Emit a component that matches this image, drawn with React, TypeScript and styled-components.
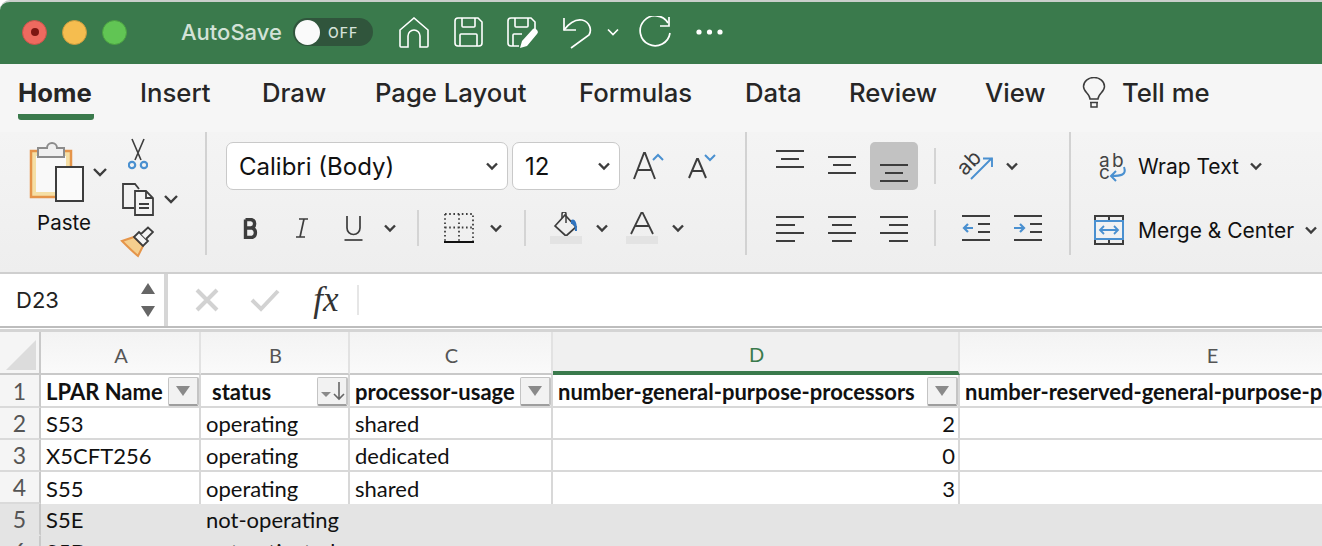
import React from 'react';
import styled, { createGlobalStyle } from 'styled-components';

const Global = createGlobalStyle`
  html, body {
    margin: 0;
    padding: 0;
    background: #fff;
    overflow: hidden;
  }
  * { box-sizing: border-box; }
`;

const uiFont = `Inter, "Noto Sans", sans-serif`;
const sheetFont = `Lato, "Open Sans", sans-serif`;

const Page = styled.div`
  width: 1322px;
  height: 546px;
  overflow: hidden;
  background: #fff;
  font-family: ${uiFont};
`;

const TitleBar = styled.div`
  height: 64px;
  background: #3a7a4c;
  border-top: 2px solid #c9cfcb;
  border-top-left-radius: 10px;
  display: flex;
  align-items: center;
  padding: 0 0 2px 22px;
`;

const Lights = styled.div`
  display: flex;
  gap: 15px;
  margin-right: 54px;
`;

const Light = styled.span<{ $c: string; $b: string }>`
  width: 25px;
  height: 25px;
  border-radius: 50%;
  background: ${p => p.$c};
  border: 1.5px solid ${p => p.$b};
  display: flex;
  align-items: center;
  justify-content: center;
`;

const RedDot = styled.span`
  width: 8px;
  height: 8px;
  border-radius: 50%;
  background: #7d1612;
`;

const AutoSave = styled.span`
  color: #d3e2d7;
  font-size: 22px;
  font-weight: 500;
  width: 112px;
  white-space: nowrap;
`;

const Toggle = styled.div`
  width: 80px;
  height: 28px;
  border-radius: 14px;
  background: #30553c;
  display: flex;
  align-items: center;
  padding-left: 2px;
  margin-right: 26px;
`;

const Knob = styled.span`
  width: 25px;
  height: 25px;
  border-radius: 50%;
  background: #fafafa;
  margin-right: 8px;
`;

const OffLabel = styled.span`
  color: #d5e2d9;
  font-size: 14px;
  font-weight: 500;
  letter-spacing: 1px;
`;

const QuickIcon = styled.span<{ $w: number; $ml?: number }>`
  width: ${p => p.$w}px;
  margin-left: ${p => p.$ml ?? 0}px;
  flex-shrink: 0;
  display: flex;
  justify-content: center;
  align-items: center;
`;

const TabBar = styled.div`
  height: 68px;
  background: #f6f6f6;
  display: flex;
  align-items: flex-start;
  padding: 13px 0 0 18px;
`;

const Tab = styled.div<{ $w: number; $active?: boolean }>`
  width: ${p => p.$w}px;
  height: 43px;
  font-size: 25.7px;
  line-height: 32px;
  color: #262626;
  font-weight: ${p => (p.$active ? 700 : 500)};
  white-space: nowrap;
  border-bottom: ${p => (p.$active ? '6px' : '0')} solid #3a7a4c;
  border-radius: 0 0 3px 3px;
`;

const TabSlot = styled.div<{ $w: number }>`
  width: ${p => p.$w}px;
`;

const Ribbon = styled.div`
  height: 142px;
  background: linear-gradient(#f4f4f4, #eeeeee);
  border-bottom: 2px solid #cfcfcf;
  display: flex;
`;

const Group = styled.div<{ $w: number; $pl: number; $last?: boolean }>`
  width: ${p => p.$w}px;
  height: 123px;
  padding: 10px 0 0 ${p => p.$pl}px;
  border-right: ${p => (p.$last ? '0' : '2px solid #d2d2d2')};
  display: flex;
  flex-direction: column;
  gap: ${p => (p.$last ? 16 : 14)}px;
  flex-shrink: 0;
`;

const Row = styled.div`
  height: 48px;
  display: flex;
  align-items: center;
`;

const Slot = styled.div<{ $w: number }>`
  width: ${p => p.$w}px;
  height: 48px;
  flex-shrink: 0;
  display: flex;
  align-items: center;
  justify-content: center;
`;

const Selected = styled.div`
  width: 48px;
  height: 48px;
  background: #c2c2c2;
  border-radius: 5px;
  display: flex;
  align-items: center;
  justify-content: center;
`;

const VSep = styled.div`
  width: 2px;
  height: 36px;
  background: #d4d4d4;
`;

const Select = styled.div<{ $w: number }>`
  width: ${p => p.$w}px;
  height: 48px;
  flex-shrink: 0;
  margin-right: 4px;
  background: #fff;
  border: 1px solid #c9c9c9;
  border-radius: 7px;
  font-size: 24px;
  color: #111;
  display: flex;
  align-items: center;
  justify-content: space-between;
  padding: 0 8px 0 12px;
`;

const ClipboardWrap = styled.div`
  display: flex;
`;

const PasteCol = styled.div`
  width: 100px;
  display: flex;
  flex-direction: column;
  align-items: flex-start;
`;

const PasteLabel = styled.div`
  font-size: 20.5px;
  color: #111;
  line-height: 24px;
  margin-top: 5px;
  width: 88px;
  text-align: center;
`;

const ToolCol = styled.div`
  display: flex;
  flex-direction: column;
  gap: 10px;
  margin-top: -4px;
`;

const ToolItem = styled.div<{ $ml?: number }>`
  height: 34px;
  margin-left: ${p => p.$ml ?? 0}px;
  display: flex;
`;

const WrapRow = styled(Row)`
  gap: 10px;
  font-size: 21px;
  color: #111;
  white-space: nowrap;
`;

const WrapIcon = styled.span`
  width: 34px;
  flex-shrink: 0;
  display: flex;
`;

const FormulaBar = styled.div`
  height: 54px;
  display: flex;
  background: #fff;
  border-bottom: 2px solid #bdbdbd;
`;

const NameBox = styled.div`
  width: 168px;
  border-right: 4px solid #d6d6d6;
  display: flex;
  align-items: center;
  justify-content: space-between;
  padding: 0 8px 0 16px;
  font-size: 22px;
  color: #222;
`;

const FormulaTools = styled.div`
  display: flex;
  align-items: center;
  padding-left: 26px;
`;

const Fx = styled.span`
  font-family: "Liberation Serif", serif;
  font-style: italic;
  font-size: 35px;
  line-height: 32px;
  color: #333;
  width: 44px;
  margin-left: 24px;
  text-align: center;
`;

const FormulaSep = styled.div`
  width: 2px;
  height: 30px;
  background: #e6e6e6;
  margin-left: 9px;
`;

const Sheet = styled.div`
  display: grid;
  grid-template-columns: 41px 160px 149px 203px 407px 505px;
  grid-template-rows: 43px 33px 32px 32px 32px 32px 32px;
  margin-top: 1px;
  border-top: 3px solid #d4d4d4;
  font-family: ${sheetFont};
  font-size: 22px;
  color: #111;
`;

const Corner = styled.div`
  background: #f5f5f5;
  border-right: 2px solid #c9c9c9;
  border-bottom: 2px solid #c9c9c9;
  display: flex;
  padding: 8px 0 0 6px;
`;

const ColHead = styled.div<{ $active?: boolean }>`
  background: ${p => (p.$active ? '#f0f0f0' : 'linear-gradient(#f3f3f3, #fafafa)')};
  color: ${p => (p.$active ? '#3a7a4c' : '#555')};
  border-right: 2px solid #e2e2e2;
  border-bottom: ${p => (p.$active ? '4px solid #3a7a4c' : '2px solid #c9c9c9')};
  font-size: 20px;
  display: flex;
  align-items: center;
  justify-content: center;
  padding: 5px 0 0 2px;
`;

const RowHead = styled.div<{ $muted?: boolean }>`
  background: ${p => (p.$muted ? '#e4e4e4' : '#f5f5f5')};
  border-right: 2px solid #c9c9c9;
  border-bottom: 2px solid ${p => (p.$muted ? '#e4e4e4' : '#dadada')};
  color: #555;
  font-size: 23px;
  display: flex;
  align-items: center;
  justify-content: center;
`;

const Cell = styled.div<{ $right?: boolean; $bold?: boolean; $muted?: boolean; $indent?: number; $flush?: boolean }>`
  background: ${p => (p.$muted ? '#e4e4e4' : '#fff')};
  border-right: 2px solid ${p => (p.$muted ? '#e4e4e4' : '#d8d8d8')};
  border-bottom: ${p => (p.$flush ? '0' : `2px solid ${p.$muted ? '#e4e4e4' : '#d8d8d8'}`)};
  display: flex;
  align-items: center;
  justify-content: ${p => (p.$right ? 'flex-end' : 'space-between')};
  padding: ${p => (p.$bold ? 1 : 0)}px 3px 0 ${p => p.$indent ?? 5}px;
  font-weight: ${p => (p.$bold ? 700 : 400)};
  white-space: nowrap;
  overflow: ${p => (p.$muted ? 'visible' : 'hidden')};
  min-width: 0;
`;

const FilterButton = styled.span`
  width: 31px;
  height: 29px;
  flex-shrink: 0;
  margin-right: -3px;
  background: #f2f2f2;
  border: 1px solid #c4c4c4;
  border-right-width: 2px;
  border-bottom: 2px solid #9e9e9e;
  border-radius: 2px;
  display: flex;
  align-items: center;
  justify-content: center;
`;

const stroke = '#3d3d3d';

const Chevron = ({ c = stroke, sw = 2.4 }: { c?: string; sw?: number }) => (
  <svg width="14" height="10" viewBox="0 0 14 10">
    <path d="M2 2.5 L7 7.5 L12 2.5" fill="none" stroke={c} strokeWidth={sw} />
  </svg>
);

const Home = () => (
  <svg width="30" height="31" viewBox="0 0 30 31" fill="none" stroke="#fff" strokeWidth="1.6">
    <path d="M1 13 L15 1 L29 13 L29 29 a1 1 0 0 1 -1 1 L21 30 L21 19 a6 6 0 0 0 -12 0 L9 30 L2 30 a1 1 0 0 1 -1 -1 Z" />
  </svg>
);

const Save = () => (
  <svg width="29" height="30" viewBox="0 0 29 30" fill="none" stroke="#fff" strokeWidth="1.6">
    <path d="M4 1 H24 L28 5 V26 a3 3 0 0 1 -3 3 H4 a3 3 0 0 1 -3 -3 V4 a3 3 0 0 1 3 -3 Z" />
    <path d="M8 1 V9 a1 1 0 0 0 1 1 H20 a1 1 0 0 0 1 -1 V1" />
    <path d="M6 29 V18 a1 1 0 0 1 1 -1 H22 a1 1 0 0 1 1 1 V29" />
  </svg>
);

const SaveEdit = () => (
  <svg width="31" height="31" viewBox="0 0 31 31" fill="none" stroke="#fff" strokeWidth="1.6">
    <path d="M12 29 H4 a3 3 0 0 1 -3 -3 V4 a3 3 0 0 1 3 -3 H24 L28 5 V13" />
    <path d="M8 1 V9 a1 1 0 0 0 1 1 H20 a1 1 0 0 0 1 -1 V1" />
    <path d="M6 29 V18 a1 1 0 0 1 1 -1 H15" />
    <path d="M13 31 L15 24 L25 13 a3 3 0 0 1 5 4 L20 29 Z" fill="#fff" stroke="none" />
  </svg>
);

const Undo = () => (
  <svg width="30" height="33" viewBox="0 0 30 33" fill="none" stroke="#fff" strokeWidth="1.7">
    <path d="M2 2 V14 H14" />
    <path d="M2 14 C8 6 14 3 20 4 C28 6 30 14 27 19 L9 32" />
  </svg>
);

const Redo = () => (
  <svg width="33" height="33" viewBox="0 0 33 33" fill="none" stroke="#fff" strokeWidth="1.7">
    <path d="M29 7 A15 15 0 1 0 31 17" />
    <path d="M30 1 V10 H21" />
  </svg>
);

const Dots = () => (
  <svg width="27" height="6" viewBox="0 0 27 6" fill="#fff">
    <circle cx="3" cy="3" r="2.6" />
    <circle cx="13.5" cy="3" r="2.6" />
    <circle cx="24" cy="3" r="2.6" />
  </svg>
);

const Bulb = () => (
  <svg width="24" height="32" viewBox="0 0 24 32" fill="none" stroke="#3d3d3d" strokeWidth="1.5">
    <path d="M8 22 C8 17 1.5 15 1.5 9.5 A10.5 9 0 0 1 22.5 9.5 C22.5 15 16 17 16 22 Z" />
    <path d="M8 25.5 H16 M9 26 V30 H15 V26" />
  </svg>
);

const PasteIcon = () => (
  <svg width="88" height="64" viewBox="0 0 88 64" fill="none">
    <rect x="11" y="9" width="40" height="46" fill="#f5dfa5" stroke="#e59449" strokeWidth="2.5" />
    <rect x="16" y="14" width="30" height="36" fill="#f9f9f9" />
    <path d="M18 9 V6 H27 a5 5 0 0 1 10 0 H44 V15 H18 Z" fill="#f0f0f0" stroke="#8c8c8c" strokeWidth="2" />
    <rect x="36" y="25" width="27" height="34" fill="#fafafa" stroke="#3d3d3d" strokeWidth="2" />
    <path d="M74 27 L80 33 L86 27" stroke={stroke} strokeWidth="2.4" />
  </svg>
);

const Scissors = () => (
  <svg width="20" height="34" viewBox="0 0 20 34" fill="none">
    <path d="M4 1 L13 22 M16 1 L7 22" stroke="#3d3d3d" strokeWidth="1.6" />
    <circle cx="4" cy="27" r="3.2" stroke="#4a90d0" strokeWidth="2.2" />
    <circle cx="16" cy="27" r="3.2" stroke="#4a90d0" strokeWidth="2.2" />
  </svg>
);

const CopyIcon = () => (
  <svg width="62" height="34" viewBox="0 0 62 34" fill="none" stroke={stroke} strokeWidth="1.8">
    <path d="M14 26 H3 V2 H15 L19 7" />
    <path d="M15 9 H26 L33 16 V33 H15 Z" fill="#f3f3f3" />
    <path d="M26 9 V16 H33" />
    <path d="M19 22 H29 M19 26 H29" />
    <path d="M45 14 L51 20 L57 14" strokeWidth="2.4" />
  </svg>
);

const Brush = () => (
  <svg width="34" height="32" viewBox="0 0 34 32" fill="none">
    <path d="M2 15 L14 11 L23 20 L18 30 C12 25 7 20 2 15 Z" fill="#f5cf8e" stroke="#e5954a" strokeWidth="2" />
    <path d="M14 11 L19 6 L28 15 L23 20 Z" fill="#f5f5f5" stroke="#3d3d3d" strokeWidth="1.8" />
    <path d="M21 8 L28 1.5 L33 6 L26 13" fill="#f5f5f5" stroke="#3d3d3d" strokeWidth="1.8" />
  </svg>
);

const GrowA = () => (
  <svg width="34" height="30" viewBox="0 0 34 30" fill="none">
    <path d="M2 28 L12 2 H13 L23 28 M6 19 H19" stroke={stroke} strokeWidth="2" />
    <path d="M21 9 L26 4 L31 9" stroke="#4a90d0" strokeWidth="2" />
  </svg>
);

const ShrinkA = () => (
  <svg width="30" height="26" viewBox="0 0 30 26" fill="none">
    <path d="M2 25 L10 6 H11 L19 25 M5 18 H16" stroke={stroke} strokeWidth="2" />
    <path d="M18 2 L23 7 L28 2" stroke="#4a90d0" strokeWidth="2" />
  </svg>
);

const Bold = () => (
  <svg width="16" height="21" viewBox="0 0 16 21" fill="none" stroke="#3d3d3d" strokeWidth="3.4">
    <path d="M2.5 1.5 V19.5 H9 a5 5 0 0 0 0 -9.5 H2.5 M2.5 10 H8 a4.3 4.3 0 0 0 0 -8.5 H2.5" />
  </svg>
);

const Italic = () => (
  <svg width="14" height="20" viewBox="0 0 14 20" fill="none" stroke="#3d3d3d" strokeWidth="1.7">
    <path d="M4 1 H13 M1 19 H10 M9 1 L5 19" />
  </svg>
);

const Under = () => (
  <svg width="19" height="26" viewBox="0 0 19 26" fill="none" stroke="#3d3d3d" strokeWidth="1.7">
    <path d="M3 1 V13 a6.5 6.5 0 0 0 13 0 V1" />
    <path d="M0.5 25 H18.5" />
  </svg>
);

const Borders = () => (
  <svg width="30" height="30" viewBox="0 0 30 30" fill="none" stroke="#3d3d3d" strokeWidth="1.8" strokeDasharray="1.6 2.6">
    <path d="M1 1 H29 V28 M1 1 V28 M1 14.5 H29 M15 1 V28" />
    <path d="M0 29 H30" strokeDasharray="none" stroke="#111" strokeWidth="2" />
  </svg>
);

const FillColor = () => (
  <svg width="32" height="32" viewBox="0 0 32 32" fill="none">
    <path d="M5 14 L15 3 L26 15 L16 24 Z" stroke={stroke} strokeWidth="1.7" />
    <path d="M12 6 V2 a2 2 0 0 1 4 0 V11" stroke={stroke} strokeWidth="1.5" />
    <path d="M21 8 C25 6 27 10 27 19 L25 19 C25 14 24 12 21 12 Z" fill="#2f74c0" />
    <rect y="24" width="32" height="8" fill="#e3e3e3" />
  </svg>
);

const FontColor = () => (
  <svg width="32" height="32" viewBox="0 0 32 32" fill="none">
    <path d="M5 22 L15.5 0.5 H16.5 L27 22 M9 14 H23" stroke={stroke} strokeWidth="1.8" />
    <rect y="24" width="32" height="8" fill="#e3e3e3" />
  </svg>
);

// one icon per alignment, lines drawn from y0 inside the 48px row
const Lines = ({ rows, y0 }: { rows: [number, number][]; y0: number }) => (
  <svg width="28" height="48" viewBox="0 0 28 48" fill="none" stroke={stroke} strokeWidth="2">
    {rows.map(([x, w], i) => (
      <path key={i} d={`M${x} ${y0 + i * 8} h${w}`} />
    ))}
  </svg>
);

const Orientation = () => (
  <svg width="34" height="34" viewBox="0 0 34 34" fill="none">
    <text x="-2" y="20" fontSize="21" fontFamily="Inter, sans-serif" fill="#3d3d3d" transform="rotate(-45 11 14)">ab</text>
    <path d="M12 30 L33 9 M24 9.5 H33 V18" stroke="#4a90d0" strokeWidth="1.9" />
  </svg>
);

const Outdent = () => (
  <svg width="28" height="26" viewBox="0 0 28 26" fill="none" stroke={stroke} strokeWidth="2">
    <path d="M0 1 H28 M16 9 H28 M16 17 H28 M0 25 H28" />
    <path d="M11 13 H2 M6 9 L2 13 L6 17" stroke="#4a90d0" strokeWidth="2.2" />
  </svg>
);

const Indent = () => (
  <svg width="28" height="26" viewBox="0 0 28 26" fill="none" stroke={stroke} strokeWidth="2">
    <path d="M0 1 H28 M16 9 H28 M16 17 H28 M0 25 H28" />
    <path d="M0 13 H10 M6 9 L10 13 L6 17" stroke="#4a90d0" strokeWidth="2.2" />
  </svg>
);

const WrapGlyph = () => (
  <svg width="34" height="34" viewBox="0 0 34 34" fill="none">
    <text x="5" y="18" fontSize="19" fontFamily="Inter, sans-serif" fill="#444">a</text>
    <text x="18" y="18" fontSize="19" fontFamily="Inter, sans-serif" fill="#444">b</text>
    <text x="5" y="30" fontSize="19" fontFamily="Inter, sans-serif" fill="#444">c</text>
    <path d="M30 18 C33 26 27 27 17 27 M22 22 L17 27 L22 32" stroke="#4a90d0" strokeWidth="2" />
  </svg>
);

const Merge = () => (
  <svg width="30" height="30" viewBox="0 0 30 30" fill="none">
    <rect x="1" y="1" width="28" height="28" stroke="#3d3d3d" strokeWidth="2" />
    <path d="M15 1 V6 M15 24 V29" stroke="#3d3d3d" strokeWidth="2" />
    <rect x="1" y="6" width="28" height="18" fill="#f2f2f2" stroke="#4a90d0" strokeWidth="2" />
    <path d="M6 15 H24 M10 11 L6 15 L10 19 M20 11 L24 15 L20 19" stroke="#4a90d0" strokeWidth="1.8" />
  </svg>
);

const Spinner = () => (
  <svg width="16" height="34" viewBox="0 0 16 34" fill="#666">
    <path d="M8 0 L15 11 H1 Z" />
    <path d="M1 23 H15 L8 34 Z" />
  </svg>
);

const Cancel = () => (
  <svg width="24" height="24" viewBox="0 0 24 24" fill="none" stroke="#d2d2d2" strokeWidth="4">
    <path d="M2 2 L22 22 M22 2 L2 22" />
  </svg>
);

const Confirm = () => (
  <svg width="30" height="24" viewBox="0 0 30 24" fill="none" stroke="#d2d2d2" strokeWidth="4">
    <path d="M2 12 L11 21 L28 3" />
  </svg>
);

const FilterArrow = () => (
  <svg width="16" height="10" viewBox="0 0 16 10" fill="#8a8a8a">
    <path d="M1 0 H15 L8 10 Z" />
  </svg>
);

const SortedArrow = () => (
  <svg width="27" height="20" viewBox="0 0 27 20" fill="none">
    <path d="M2 11 H12 L7 16 Z" fill="#8a8a8a" />
    <path d="M20 1 V18 M15 13 L20 18 L25 13" stroke="#666" strokeWidth="1.6" />
  </svg>
);

const threeLines: [number, number][] = [[0, 28], [5, 18], [0, 28]];
const alignLeft: [number, number][] = [[0, 28], [0, 19], [0, 28], [0, 19]];
const alignCenter: [number, number][] = [[0, 28], [4, 20], [0, 28], [4, 20]];
const alignRight: [number, number][] = [[0, 28], [9, 19], [0, 28], [9, 19]];

const tabs: [string, number][] = [
  ['Insert', 122],
  ['Draw', 113],
  ['Page Layout', 204],
  ['Formulas', 166],
  ['Data', 104],
  ['Review', 136],
  ['View', 97],
];

const dataRows = [
  ['S53', 'operating', 'shared', '2'],
  ['X5CFT256', 'operating', 'dedicated', '0'],
  ['S55', 'operating', 'shared', '3'],
];

const mutedRows = [
  ['S5E', 'not-operating'],
  ['S5D', 'not-activated'],
];

const App = () => (
  <Page>
    <Global />
    <TitleBar>
      <Lights>
        <Light $c="#ee6a5f" $b="#c9544a"><RedDot /></Light>
        <Light $c="#f5bd4f" $b="#c89a3e" />
        <Light $c="#61c554" $b="#4ba042" />
      </Lights>
      <AutoSave>AutoSave</AutoSave>
      <Toggle><Knob /><OffLabel>OFF</OffLabel></Toggle>
      <QuickIcon $w={30}><Home /></QuickIcon>
      <QuickIcon $w={29} $ml={25}><Save /></QuickIcon>
      <QuickIcon $w={31} $ml={24}><SaveEdit /></QuickIcon>
      <QuickIcon $w={30} $ml={24}><Undo /></QuickIcon>
      <QuickIcon $w={14} $ml={14}><Chevron c="#fff" sw={1.7} /></QuickIcon>
      <QuickIcon $w={33} $ml={19}><Redo /></QuickIcon>
      <QuickIcon $w={27} $ml={24}><Dots /></QuickIcon>
    </TitleBar>

    <TabBar>
      <Tab $w={76} $active>Home</Tab>
      <TabSlot $w={46} />
      {tabs.map(([label, w]) => (
        <Tab key={label} $w={w}>{label}</Tab>
      ))}
      <QuickIcon $w={24}><Bulb /></QuickIcon>
      <TabSlot $w={16} />
      <Tab $w={100}>Tell me</Tab>
    </TabBar>

    <Ribbon>
      <Group $w={207} $pl={20}>
        <ClipboardWrap>
          <PasteCol>
            <PasteIcon />
            <PasteLabel>Paste</PasteLabel>
          </PasteCol>
          <ToolCol>
            <ToolItem $ml={8}><Scissors /></ToolItem>
            <ToolItem><CopyIcon /></ToolItem>
            <ToolItem><Brush /></ToolItem>
          </ToolCol>
        </ClipboardWrap>
      </Group>

      <Group $w={540} $pl={19}>
        <Row>
          <Select $w={282}>Calibri (Body)<Chevron /></Select>
          <Select $w={108}>12<Chevron /></Select>
          <Slot $w={50}><GrowA /></Slot>
          <Slot $w={56}><ShrinkA /></Slot>
        </Row>
        <Row>
          <Slot $w={49}><Bold /></Slot>
          <Slot $w={54}><Italic /></Slot>
          <Slot $w={48}><Under /></Slot>
          <Slot $w={26}><Chevron /></Slot>
          <Slot $w={30}><VSep /></Slot>
          <Slot $w={52}><Borders /></Slot>
          <Slot $w={22}><Chevron /></Slot>
          <Slot $w={36}><VSep /></Slot>
          <Slot $w={46}><FillColor /></Slot>
          <Slot $w={26}><Chevron /></Slot>
          <Slot $w={54}><FontColor /></Slot>
          <Slot $w={18}><Chevron /></Slot>
        </Row>
      </Group>

      <Group $w={324} $pl={17}>
        <Row>
          <Slot $w={52}><Lines rows={threeLines} y0={9} /></Slot>
          <Slot $w={52}><Lines rows={threeLines} y0={15} /></Slot>
          <Slot $w={52}><Selected><Lines rows={threeLines} y0={23} /></Selected></Slot>
          <Slot $w={30}><VSep /></Slot>
          <Slot $w={52}><Orientation /></Slot>
          <Slot $w={20}><Chevron /></Slot>
        </Row>
        <Row>
          <Slot $w={52}><Lines rows={alignLeft} y0={13} /></Slot>
          <Slot $w={52}><Lines rows={alignCenter} y0={13} /></Slot>
          <Slot $w={52}><Lines rows={alignRight} y0={13} /></Slot>
          <Slot $w={30}><VSep /></Slot>
          <Slot $w={52}><Outdent /></Slot>
          <Slot $w={52}><Indent /></Slot>
        </Row>
      </Group>

      <Group $w={251} $pl={23} $last>
        <WrapRow>
          <WrapIcon><WrapGlyph /></WrapIcon>
          <span>Wrap Text</span>
          <Chevron />
        </WrapRow>
        <WrapRow>
          <WrapIcon><Merge /></WrapIcon>
          <span>Merge &amp; Center</span>
          <Chevron />
        </WrapRow>
      </Group>
    </Ribbon>

    <FormulaBar>
      <NameBox>D23<Spinner /></NameBox>
      <FormulaTools>
        <Slot $w={26}><Cancel /></Slot>
        <Slot $w={30} />
        <Slot $w={30}><Confirm /></Slot>
        <Fx>fx</Fx>
        <FormulaSep />
      </FormulaTools>
    </FormulaBar>

    <Sheet>
      <Corner>
        <svg width="30" height="30" viewBox="0 0 30 30" fill="#dcdcdc">
          <path d="M30 0 V30 H0 Z" />
        </svg>
      </Corner>
      <ColHead>A</ColHead>
      <ColHead>B</ColHead>
      <ColHead>C</ColHead>
      <ColHead $active>D</ColHead>
      <ColHead>E</ColHead>

      <RowHead>1</RowHead>
      <Cell $bold>LPAR Name<FilterButton><FilterArrow /></FilterButton></Cell>
      <Cell $bold $indent={11}>status<FilterButton><SortedArrow /></FilterButton></Cell>
      <Cell $bold>processor-usage<FilterButton><FilterArrow /></FilterButton></Cell>
      <Cell $bold>number-general-purpose-processors<FilterButton><FilterArrow /></FilterButton></Cell>
      <Cell $bold>number-reserved-general-purpose-processors</Cell>

      {dataRows.map((r, i) => {
        const flush = i === dataRows.length - 1;
        return (
          <React.Fragment key={r[0]}>
            <RowHead>{i + 2}</RowHead>
            <Cell $flush={flush}>{r[0]}</Cell>
            <Cell $flush={flush}>{r[1]}</Cell>
            <Cell $flush={flush}>{r[2]}</Cell>
            <Cell $flush={flush} $right>{r[3]}</Cell>
            <Cell $flush={flush} />
          </React.Fragment>
        );
      })}

      {mutedRows.map((r, i) => (
        <React.Fragment key={r[0]}>
          <RowHead $muted>{i + 5}</RowHead>
          <Cell $muted>{r[0]}</Cell>
          <Cell $muted>{r[1]}</Cell>
          <Cell $muted />
          <Cell $muted />
          <Cell $muted />
        </React.Fragment>
      ))}
    </Sheet>
  </Page>
);

export default App;
